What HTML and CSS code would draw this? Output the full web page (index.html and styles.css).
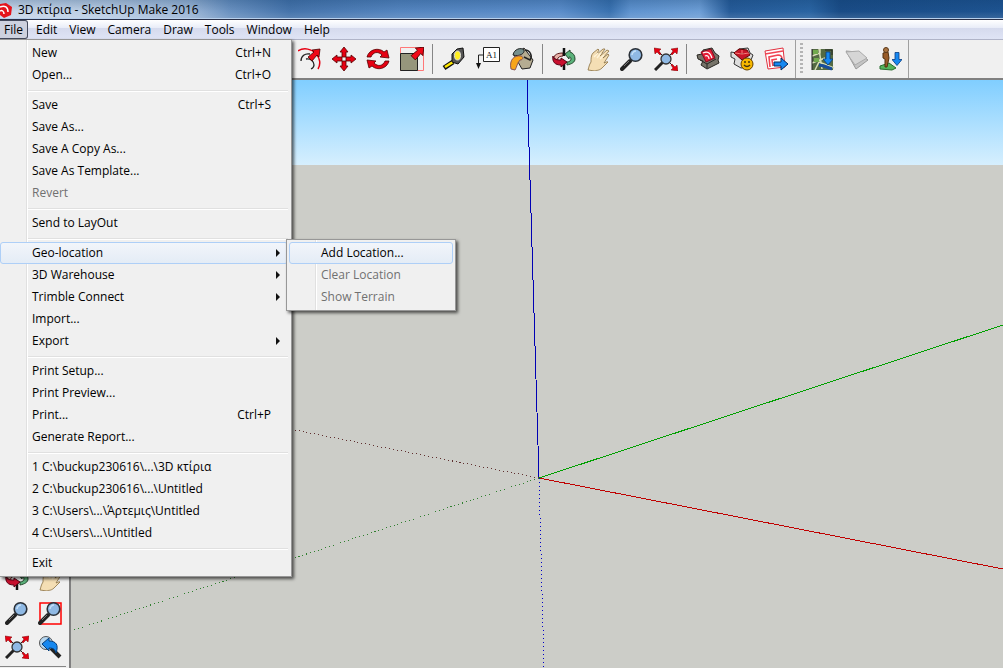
FILE: index.html
```html
<!DOCTYPE html>
<html lang="en">
<head>
<meta charset="utf-8">
<title>3D κτίρια - SketchUp Make 2016</title>
<link rel="stylesheet" href="styles.css">
</head>
<body>
<svg class="sprite" aria-hidden="true">
  <symbol id="orbit" viewBox="0 0 24 24">
    <path d="M11 6C5 6 2 8 2 11l3 2c1-3 3-4 6-4z" fill="#e8b0a8" stroke="#5a1a1a" />
    <path d="M12 1v8" stroke="#111" stroke-width="2.500"/>
    <path d="M13 7l5-4v2c3 1 5 3 5 7 0 3-3 5-8 6v-3c3 0 4-2 4-3 0-2-1-2-2-2v2z" fill="#5bb27b" stroke="#24482c"/>
    <path d="M12 16v7" stroke="#111" stroke-width="2.500"/>
    <path d="M1 9c0 3 3 4 8 4v-2l6 4-6 5v-2c-6 0-9-3-8-9z" fill="#c8102e" stroke="#501" />
  </symbol>
  <symbol id="hand" viewBox="0 0 24 24">
    <path d="M2 23c1-3 1-5 3-8 0-3 0-7 2-9l5-4 1 1-3 5 7-6 2 0-5 7 7-6 2 1-6 7 5-4 1 1-5 8c1 0 3-2 4-1l-6 6c-3 3-6 2-7 3z" fill="#f4deb4" stroke="#8a7040" stroke-width=".8"/>
    <path d="M8 10l4-4M11 11l4-5M14 12l4-4" stroke="#fff3d8" stroke-width="1.500"/>
  </symbol>
  <symbol id="lens" viewBox="0 0 24 24">
    <path d="M2 22l8-8" stroke="#222" stroke-width="4" stroke-linecap="round"/>
    <path d="M4 19l5-5" stroke="#777" stroke-width="1"/>
    <circle cx="15.500" cy="8" r="6.300" fill="#8fb9e4" stroke="#2a3038" stroke-width="1.600"/>
    <path d="M12 8c0-2 2-4 4-4" fill="none" stroke="#c4e0f8" stroke-width="1.500"/>
  </symbol>
  <symbol id="redarrow" viewBox="-1 -1 14 14">
    <path d="M12 0l-1 8-2-2-5 6-4-4 6-5-2-2z" fill="#f00818" stroke="#400" stroke-width=".8"/>
  </symbol>
  <symbol id="extents" viewBox="0 0 24 24">
    <path d="M1 23l8-8" stroke="#222" stroke-width="3"/>
    <path d="M15 9l4-4M9 9L5 5M15 15l4 4" stroke="#222"/>
    <circle cx="12" cy="12" r="5" fill="#8fb9e4" stroke="#333" stroke-width="1.300"/>
    <g fill="#e60012" stroke="#700" stroke-width=".5"><path d="M0 1l7 1-2 2 2 3-1 1-3-3-2 2z"/><path d="M24 1l-7 1 2 2-2 3 1 1 3-3 2 2z"/><path d="M24 24l-7-1 2-2-2-3 1-1 3 3 2-2z"/></g>
  </symbol>
  <symbol id="down" viewBox="0 0 10 14"><path d="M3 1h4v7h3l-5 6-5-6h3z" fill="#1688f0" stroke="#073b80" stroke-width=".8"/></symbol>
  <symbol id="warehouse" viewBox="0 0 24 24">
    <path d="M1 8l5-1 1-4 9-2 3 5 4 3-1 4 1 3-12 6-6-4 2-4-5-2z" fill="#77746a" stroke="#292722"/>
    <path d="M4 13l7 4 9-5M11 17v4" fill="none" stroke="#292722"/>
    <path d="M5 5l10-3 4 9-9 4z" fill="#e51d36" stroke="#801020"/>
    <path d="M7 6c4-2 7-1 9 5M9 9c2-1 4 0 4 3" fill="none" stroke="#fff" stroke-width="1.200"/>
  </symbol>
</svg>
<div class="app">
  <header class="titlebar">
    <svg class="logo" viewBox="0 0 12 16" aria-hidden="true"><path d="M0 2l6-1 6 4-1 8-7 3-4-3z" fill="#e5141c"/><path d="M0 5c5-2 8 0 8 5M0 9c2-1 4 0 4 3" fill="none" stroke="#fff" stroke-width="1.500"/></svg>
    <h1>3D κτίρια - SketchUp Make 2016</h1>
  </header>
  <nav class="menubar" aria-label="Main menu">
    <button class="open" aria-expanded="true">File</button><button>Edit</button><button>View</button><button>Camera</button><button>Draw</button><button>Tools</button><button>Window</button><button>Help</button>
  </nav>
  <div class="toolbar" role="toolbar" aria-label="Getting started">
    <div class="tools">
      <button aria-label="Offset"><svg viewBox="0 0 24 24"><path d="M0 4C6 0 14 2 18 7c4 4 5 10 2 15" fill="none" stroke="#e60012" stroke-width="1.500"/><path d="M3 14c0-5 4-8 9-7M8 12c5-1 8 3 8 6 0 2-1 3-3 4" fill="none" stroke="#222" stroke-width="1.300"/><use href="#redarrow" x="9" y="1" width="14" height="14"/></svg></button>
      <button aria-label="Move"><svg viewBox="0 0 24 24"><g fill="#e60012" stroke="#500" stroke-width=".8"><path id="mv" d="M12 0l4 5h-2v5h-4V5H8z"/><use href="#mv" transform="rotate(90 12 12)"/><use href="#mv" transform="rotate(180 12 12)"/><use href="#mv" transform="rotate(270 12 12)"/></g></svg></button>
      <button aria-label="Rotate"><svg viewBox="0 0 24 24"><g fill="#e60012" stroke="#500" stroke-width=".8"><path id="rt" d="M1 10C3 2 13 0 18 5l3-2 2 8-9-1 2-2C12 4 7 5 5 10z"/><use href="#rt" transform="rotate(180 12 12)"/></g></svg></button>
      <button aria-label="Scale"><svg viewBox="0 0 24 24"><path d="M.5.5h23v23H.5z" fill="none" stroke="#f77"/><path d="M.5 6.500h17v17H.5z" fill="#96967c" stroke="#222"/><use href="#redarrow" x="10" y="-1" width="15" height="15"/></svg></button>
    </div>
    <div class="tools">
      <button aria-label="Tape measure"><svg viewBox="0 0 24 24"><path d="M2 21l9-6" stroke="#111" stroke-width="5"/><path d="M3 20l8-5" stroke="#ffe800" stroke-width="2.500"/><path d="M10 7l5-5 6-1 1 9-6 7-6-2z" fill="#555" stroke="#111"/><ellipse cx="15.500" cy="8.500" rx="3" ry="4.500" fill="#ffee20" stroke="#ddd"/></svg></button>
      <button aria-label="Text"><svg viewBox="0 0 24 24"><path d="M7.500 .5h16v14h-16z" fill="#fff" stroke="#222"/><path d="M7 8H2.500v9" fill="none" stroke="#222"/><path d="M0 16h5l-2.500 6z" fill="#111"/><text x="10" y="11" class="glyph">A1</text></svg></button>
      <button aria-label="Paint bucket"><svg viewBox="0 0 24 24"><path d="M4 8l10-7 9 12-3 8-8 1z" fill="#b5ac92" stroke="#222"/><path d="M3 8C4 2 11 0 14 3c1 3-4 7-11 5z" fill="#76908d" stroke="#222"/><path d="M15 3c5 0 8 6 5 10l-6-3" fill="none" stroke="#222" stroke-width="1.500"/><path d="M1 22C-1 13 4 8 11 9c3 1 2 4-1 4-3 3-3 7-5 10z" fill="#f8a51b" stroke="#855"/></svg></button>
    </div>
    <div class="tools">
      <button aria-label="Orbit"><svg><use href="#orbit"/></svg></button>
      <button aria-label="Pan"><svg><use href="#hand"/></svg></button>
      <button aria-label="Zoom"><svg><use href="#lens"/></svg></button>
      <button aria-label="Zoom extents"><svg><use href="#extents"/></svg></button>
    </div>
    <div class="tools last">
      <button aria-label="3D Warehouse"><svg><use href="#warehouse"/></svg></button>
      <button aria-label="Extension Warehouse"><svg viewBox="0 0 24 24"><path d="M1 5l6 1 2-4 9-1 2 5 3 2-2 5-2 7-8 1-7-4 1-5-4-2z" fill="#ddd" stroke="#333"/><path d="M4 6l5-4 8 1 3 5-8 5z" fill="#c81628" stroke="#600"/><path d="M5 6l7 1 7-1M12 7V3" stroke="#f77"/><circle cx="17" cy="17" r="6" fill="#f6b800" stroke="#654100"/><path d="M14 15h2m2 0h2m-6 3c2 2 4 2 6 0" fill="none" stroke="#431" stroke-width="1.500"/></svg></button>
      <button aria-label="Send to LayOut"><svg viewBox="0 0 24 24"><path d="M1 4l18-3 2 19-17 2z" fill="#fff" stroke="#e22f3d"/><path d="M1 7l18-3M6 20L5 10l9-2c3 0 4 2 4 4M9 19l-1-6 5-1" fill="none" stroke="#f04554" stroke-width="1.600"/><path d="M10 15h7v-4l7 6-7 6v-4h-7z" fill="#1688f0" stroke="#042c60"/></svg></button>
    </div>
    <div class="tools location">
      <button aria-label="Add location"><svg viewBox="0 0 24 24"><path d="M1 2h21v21H1z" fill="#546a43"/><path d="M1 9l8-3V2M8 2l3 20M1 16l13-5M4 23l4-8 15 6" fill="none" stroke="#d8dfb7" stroke-width="1.500"/><path d="M2 3h5v4H2zm1 8h5v4H3z" fill="#71a94d"/><path d="M8 18l5 1 8 3" stroke="#174d9b" stroke-width="3"/><path d="M1 2v21M14 3h7v5" fill="none" stroke="#222"/><use href="#down" x="12" y="4" width="10" height="14"/></svg></button>
      <button aria-label="Toggle terrain"><svg viewBox="0 0 24 24"><path d="M1 4l11 1 11 8-12 9z" fill="#c4c4c4" stroke="#999"/><path d="M1 5l13-1 8 7-12 7z" fill="#d6d6d6" stroke="#aaa"/></svg></button>
      <button aria-label="Photo textures"><svg viewBox="0 0 24 24"><path d="M1 19l9-3 7 5-4 2-12-1z" fill="#55b45b" stroke="#286c2e"/><path d="M4 6l5-1 1 6-2 9H6v-8l-2-1z" fill="#985b28" stroke="#50300e"/><circle cx="7" cy="3" r="2.500" fill="#a97543" stroke="#5c3817"/><use href="#down" x="13" y="4" width="10" height="15"/></svg></button>
    </div>
  </div>
  <main class="workspace">
    <aside class="side" aria-label="Camera tools">
      <div class="sidegrid">
        <button aria-label="Orbit"><svg><use href="#orbit"/></svg></button>
        <button aria-label="Pan"><svg><use href="#hand"/></svg></button>
        <button aria-label="Zoom"><svg><use href="#lens"/></svg></button>
        <button aria-label="Zoom window"><svg viewBox="0 0 24 24"><path d="M2 2h21v21H2z" fill="none" stroke="#f00" stroke-width="1.500"/><use href="#lens" width="24" height="24"/></svg></button>
        <button aria-label="Zoom extents"><svg><use href="#extents"/></svg></button>
        <button aria-label="Previous"><svg viewBox="0 0 24 24"><circle cx="8" cy="8" r="6.500" fill="#b5d5ee" stroke="#555"/><path d="M13 13l9 9" stroke="#222" stroke-width="4"/><path d="M4 9l7-6v3c7 0 10 4 7 12-1-4-3-5-7-5v3z" fill="#1688f0" stroke="#063d78"/></svg></button>
      </div>
    </aside>
    <div class="canvas">
      <svg viewBox="71 80 932 588" preserveAspectRatio="xMinYMin slice" role="img" aria-label="Drawing axes">
        <g shape-rendering="crispEdges" fill="none">
          <path d="M539 478L527 80" stroke="#0000b4"/>
          <path d="M539 478L1003 325" stroke="#00a000"/>
          <path d="M539 478L1003 569" stroke="#c00000"/>
          <path d="M539 478l5 190" stroke="#0000c8" stroke-dasharray="1 3"/>
          <path d="M539 478L71 386" stroke="#603030" stroke-dasharray="1 3"/>
          <path d="M539 478L71 631" stroke="#308030" stroke-dasharray="1 3"/>
        </g>
      </svg>
    </div>
  </main>
  <div class="popup filemenu" role="menu" aria-label="File">
    <button role="menuitem"><span>New</span><kbd>Ctrl+N</kbd></button>
    <button role="menuitem"><span>Open...</span><kbd>Ctrl+O</kbd></button>
    <hr>
    <button role="menuitem"><span>Save</span><kbd>Ctrl+S</kbd></button>
    <button role="menuitem">Save As...</button>
    <button role="menuitem">Save A Copy As...</button>
    <button role="menuitem">Save As Template...</button>
    <button role="menuitem" disabled>Revert</button>
    <hr>
    <button role="menuitem">Send to LayOut</button>
    <hr>
    <button role="menuitem" class="more active" aria-expanded="true">Geo-location</button>
    <button role="menuitem" class="more">3D Warehouse</button>
    <button role="menuitem" class="more">Trimble Connect</button>
    <button role="menuitem">Import...</button>
    <button role="menuitem" class="more">Export</button>
    <hr>
    <button role="menuitem">Print Setup...</button>
    <button role="menuitem">Print Preview...</button>
    <button role="menuitem"><span>Print...</span><kbd>Ctrl+P</kbd></button>
    <button role="menuitem">Generate Report...</button>
    <hr>
    <button role="menuitem">1 C:\buckup230616\...\3D κτίρια</button>
    <button role="menuitem">2 C:\buckup230616\...\Untitled</button>
    <button role="menuitem">3 C:\Users\...\Άρτεμις\Untitled</button>
    <button role="menuitem">4 C:\Users\...\Untitled</button>
    <hr>
    <button role="menuitem">Exit</button>
  </div>
  <div class="popup submenu" role="menu" aria-label="Geo-location">
    <button role="menuitem" class="active">Add Location...</button>
    <button role="menuitem" disabled>Clear Location</button>
    <button role="menuitem" disabled>Show Terrain</button>
  </div>
</div>
</body>
</html>
```
FILE: styles.css
```css
* { box-sizing: border-box; }
body {
  margin: 0;
  font: 12px/20px "Open Sans", "Noto Sans", sans-serif;
  color: #000;
}
button {
  margin: 0;
  padding: 0;
  border: 0;
  background: none;
  font: inherit;
  color: inherit;
}
.sprite { position: absolute; width: 0; height: 0; }
.app {
  position: relative;
  display: flex;
  flex-direction: column;
  height: 100vh;
  overflow: hidden;
}
.titlebar {
  display: flex;
  align-items: center;
  gap: 6px;
  height: 20px;
  flex: none;
  border-bottom: 1px solid #2a3048;
  background:
    linear-gradient(transparent 18px, #b8d0ec 18px),
    linear-gradient(#0a386840, transparent 60%, #ffffff20),
    linear-gradient(90deg, #cad8ea, #b9cce3 110px, #9cb6d6 190px, #6a91c0 230px, #4674ab 290px, #5585bf 400px, #5b8dca 560px, #3a72b0 610px, #5f93cf 630px, #6d9ed6 700px, #265b98 730px, #2a64a2 810px, #1a4c86 840px, #1e5390);
}
.titlebar h1 { margin: 0; font-size: 12px; font-weight: 400; }
.logo { width: 12px; height: 16px; }
.menubar {
  display: flex;
  height: 19px;
  flex: none;
  padding-right: 8px;
  background: linear-gradient(#fff, #e9edf8 40%, #d5daed 42%, #dfe4f5);
}
.menubar button { padding: 0 5px; line-height: 18px; border: 1px solid transparent; }
.menubar .open {
  margin-right: 2px;
  padding: 0 4px;
  border: 1px solid #444a5c;
  border-left: 0;
  border-radius: 0 3px 3px 0;
  background: #cdd1de;
}
.toolbar {
  display: flex;
  flex: none;
  height: 41px;
  padding-left: 293px;
  border-top: 1px solid #b0b4c8;
  border-bottom: 2px solid #808080;
  background: #f0f0f0;
}
.tools { display: flex; align-items: center; }
.tools button, .sidegrid button {
  display: grid;
  place-items: center;
  width: 34px;
  height: 34px;
}
.tools svg, .sidegrid svg { width: 24px; height: 24px; display: block; }
.tools + .tools::before {
  content: "";
  width: 1px;
  height: 30px;
  margin: 0 4px 0 3px;
  background: #868686;
}
.tools.last { padding-right: 2px; border-right: 1px solid #a0a0a0; }
.tools.location { border-right: 1px solid #a0a0a0; }
.tools + .tools.location::before {
  width: 3px;
  height: 32px;
  margin: 0 3px 0 4px;
  background: repeating-linear-gradient(#b4b4b4 0 2px, transparent 2px 4px);
}
.glyph { font: 9px "Liberation Serif", serif; fill: #111; }
.workspace { display: flex; flex: 1; min-height: 0; }
.side {
  display: flex;
  flex-direction: column;
  justify-content: flex-end;
  width: 71px;
  flex: none;
  border-right: 2px solid #808080;
  background: #f0f0f0;
}
.sidegrid {
  display: grid;
  grid-template-columns: 33px 33px;
  margin: 0 3px 1px 0;
  padding-bottom: 2px;
  border-bottom: 1px solid #868686;
}
.canvas {
  flex: 1;
  min-width: 0;
  background: linear-gradient(#80ceff, #d6effe 85px, #cccdc8 85px);
}
.canvas svg { display: block; width: 100%; height: 100%; }
.popup {
  position: absolute;
  display: flex;
  flex-direction: column;
  border: 1px solid #979797;
  background: #f0f0f0;
  box-shadow: 2px 2px 3px #000000a0;
}
.filemenu {
  top: 39px;
  left: 0;
  width: 292px;
  padding: 2px 3px 2px 0;
  border-left: 0;
  background: linear-gradient(90deg, transparent 26px, #e0e0e0 26px 27px, #fff 27px 28px, transparent 28px) #f0f0f0;
}
.submenu {
  top: 239px;
  left: 286px;
  width: 170px;
  padding: 2px;
  background: linear-gradient(90deg, transparent 28px, #e0e0e0 28px 29px, #fff 29px 30px, transparent 30px) #f0f0f0;
}
.popup button {
  display: flex;
  justify-content: space-between;
  align-items: center;
  height: 22px;
  padding: 0 16px 0 31px;
  border: 1px solid transparent;
  border-radius: 3px;
  text-align: left;
  white-space: pre;
}
.popup button:disabled { color: #707070; }
.popup .active { border-color: #aecff7; background: linear-gradient(#f2f5fa, #e4ecf6); }
.popup kbd { font: inherit; }
.popup hr {
  width: calc(100% - 28px);
  height: 2px;
  margin: 4px 0 2px 28px;
  border: 0;
  border-top: 1px solid #e0e0e0;
  background: #fff;
}
.popup .more { padding-right: 7px; }
.more::after {
  content: "";
  border-left: 4px solid #111;
  border-top: 4px solid transparent;
  border-bottom: 4px solid transparent;
}
```
